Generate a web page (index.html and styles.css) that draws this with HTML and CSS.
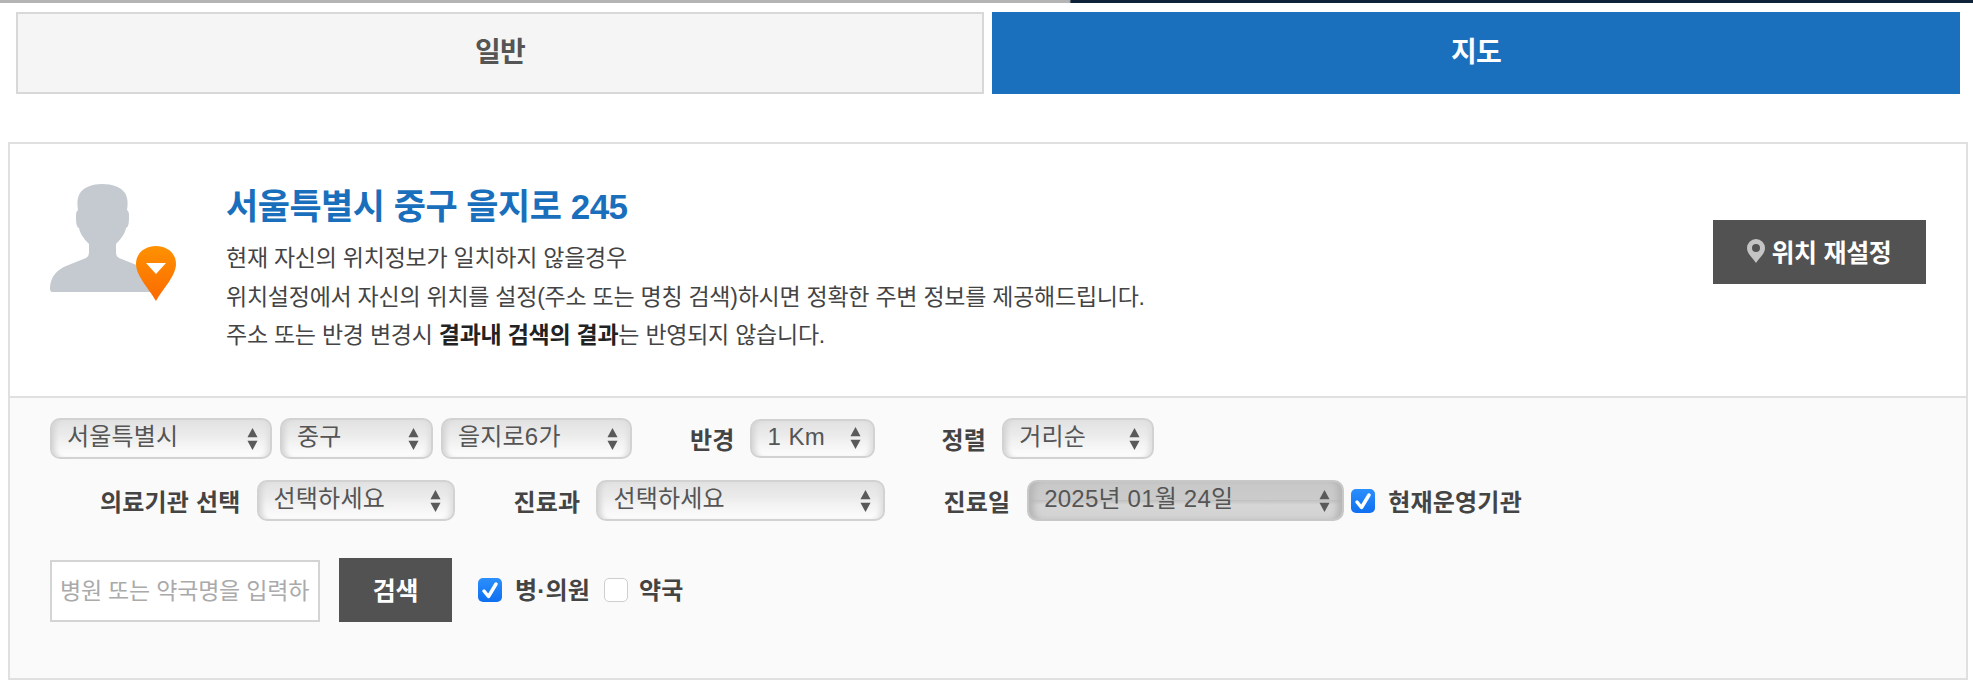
FILE: index.html
```html
<!DOCTYPE html>
<html lang="ko">
<head>
    <meta charset="UTF-8">
    <title>병원 찾기</title>
    <link rel="stylesheet" href="styles.css">
</head>
<body>
    <div class="topline"></div>
    <div class="tabs">
        <a class="tab" href="#">일반</a>
        <a class="tab on" href="#">지도</a>
    </div>

    <div class="box">
        <div class="loc">
            <svg class="avatar" width="130" height="120" viewBox="0 0 130 120">
                <path fill="#c5cad1" d="M3 108C0 108 0 106 0 103C1 92 7 86 16 82L36 74C39 72 39 70 39 66V60C33 54 30 49 29 44C26 43 26 37 26 31C26 28 27 27 28 26C27 20 27 14 30 9C34 3 43 0 52 0C62 0 71 3 75 9C78 14 78 20 77 26C78 27 79 28 79 31C79 37 79 43 76 44C75 49 72 54 66 60V66C66 70 66 72 69 74L89 82C98 86 104 92 105 103V108Z"/>
                <defs>
                    <linearGradient id="pin" x1="0" y1="0" x2="0" y2="1">
                        <stop offset="0" stop-color="#ff9100"/>
                        <stop offset="1" stop-color="#fb6a00"/>
                    </linearGradient>
                </defs>
                <path fill="url(#pin)" d="M106 117C100 106 86 92 86 80C86 69 95 62 106 62S126 69 126 80C126 92 112 106 106 117Z"/>
                <path fill="#fff" d="M96 79h20l-10 11z"/>
            </svg>
            <div class="loc_text">
                <h2>서울특별시 중구 을지로 245</h2>
                <p>현재 자신의 위치정보가 일치하지 않을경우</p>
                <p>위치설정에서 자신의 위치를 설정(주소 또는 명칭 검색)하시면 정확한 주변 정보를 제공해드립니다.</p>
                <p>주소 또는 반경 변경시 <b>결과내 검색의 결과</b>는 반영되지 않습니다.</p>
            </div>
            <a class="btn reset" href="#">
                <svg width="18" height="24" viewBox="0 0 18 24"><path fill="#c4c4c4" fill-rule="evenodd" d="M9 24C6 19 0 15 0 9a9 9 0 0 1 18 0c0 6-6 10-9 15zM9 5a4 4 0 1 0 0 8 4 4 0 0 0 0-8z"/></svg>
                위치 재설정
            </a>
        </div>

        <div class="search">
            <div class="row row1">
                <span class="sel w222"><select><option>서울특별시</option></select><svg viewBox="0 0 12 24"><path d="M6 0l5.500 10H.5zM6 24L.5 14h11z"/></svg></span>
                <span class="sel w153"><select><option>중구</option></select><svg viewBox="0 0 12 24"><path d="M6 0l5.500 10H.5zM6 24L.5 14h11z"/></svg></span>
                <span class="sel w190"><select><option>을지로6가</option></select><svg viewBox="0 0 12 24"><path d="M6 0l5.500 10H.5zM6 24L.5 14h11z"/></svg></span>
                <label class="lab radius">반경</label>
                <span class="sel w125 small"><select><option>1 Km</option></select><svg viewBox="0 0 12 24"><path d="M6 0l5.500 10H.5zM6 24L.5 14h11z"/></svg></span>
                <label class="lab order">정렬</label>
                <span class="sel w152"><select><option>거리순</option></select><svg viewBox="0 0 12 24"><path d="M6 0l5.500 10H.5zM6 24L.5 14h11z"/></svg></span>
            </div>
            <div class="row row2">
                <label class="lab org">의료기관 선택</label>
                <span class="sel w198"><select><option>선택하세요</option></select><svg viewBox="0 0 12 24"><path d="M6 0l5.500 10H.5zM6 24L.5 14h11z"/></svg></span>
                <label class="lab dept">진료과</label>
                <span class="sel w289"><select><option>선택하세요</option></select><svg viewBox="0 0 12 24"><path d="M6 0l5.500 10H.5zM6 24L.5 14h11z"/></svg></span>
                <label class="lab day">진료일</label>
                <span class="sel w317 active"><select><option>2025년 01월 24일</option></select><svg viewBox="0 0 12 24"><path d="M6 0l5.500 10H.5zM6 24L.5 14h11z"/></svg></span>
                <label class="chk open"><i class="box_on"><svg viewBox="0 0 24 24"><path d="M6 13l4.500 5.500L18 6"/></svg></i>현재운영기관</label>
            </div>
            <div class="row row3">
                <input type="text" class="keyword" placeholder="병원 또는 약국명을 입력하세요">
                <a class="btn find" href="#">검색</a>
                <label class="chk first"><i class="box_on"><svg viewBox="0 0 24 24"><path d="M6 13l4.500 5.500L18 6"/></svg></i><span>병·의원</span></label>
                <label class="chk second"><i class="box_off"></i><span>약국</span></label>
            </div>
        </div>
    </div>
</body>
</html>
```

FILE: styles.css
```css
* {
    box-sizing: border-box;
}

body {
    margin: 0;
    height: 690px;
    overflow: hidden;
    background: #fff;
    color: #333;
    font-family: "Liberation Sans", "Noto Sans CJK KR", sans-serif;
}

a {
    text-decoration: none;
}

.topline {
    height: 3px;
    background: linear-gradient(to right, #b4b4b4 0, #b4b4b4 54.2%, #0e2238 54.3%, #0e2238 100%);
}

.tabs {
    display: flex;
    gap: 8px;
    margin: 9px 13px 0 16px;
}

.tab {
    flex: 1;
    height: 82px;
    line-height: 77px;
    text-align: center;
    font-size: 28px;
    font-weight: 700;
    letter-spacing: -0.8px;
    color: #555;
    background: #f5f5f5;
    border: 2px solid #d8d8d8;
}

.tab.on {
    color: #fff;
    background: #1a70bc;
    border-color: #1a70bc;
}

.box {
    margin: 48px 5px 0 8px;
    height: 538px;
    border: 2px solid #e0e0e0;
}

/* location */
.loc {
    display: flex;
    align-items: flex-start;
    height: 252px;
    padding: 40px 40px 0 40px;
}

.avatar {
    flex: none;
    margin-right: 46px;
}

.loc_text {
    flex: 1;
}

.loc_text h2 {
    margin: 0 0 9px;
    font-size: 35px;
    line-height: 46px;
    font-weight: 700;
    letter-spacing: -0.5px;
    color: #1a6fbc;
}

.loc_text p {
    margin: 0;
    font-size: 23px;
    line-height: 38.500px;
    letter-spacing: -0.25px;
    color: #444;
}

.loc_text b {
    color: #222;
}

.btn {
    display: flex;
    align-items: center;
    justify-content: center;
    padding-bottom: 2px;
    color: #fff;
    background: #525252;
    font-weight: 700;
}

.reset {
    width: 213px;
    height: 64px;
    margin-top: 36px;
    gap: 6px;
    font-size: 25px;
    letter-spacing: -0.3px;
}

/* search */
.search {
    height: 282px;
    padding: 20px 0 0 40px;
    background: #fafafa;
    border-top: 2px solid #e0e0e0;
}

.row {
    display: flex;
    align-items: center;
}

.row1 {
    height: 41px;
}

.row2 {
    height: 41px;
    margin-top: 21px;
}

.row3 {
    height: 64px;
    margin-top: 37px;
}

.lab {
    font-size: 24px;
    font-weight: 700;
    letter-spacing: 0.2px;
    color: #444;
    white-space: nowrap;
}

.sel {
    position: relative;
    display: block;
    flex: none;
    height: 41px;
    margin-right: 8px;
}

.sel select {
    display: block;
    width: 100%;
    height: 100%;
    padding: 0 30px 5px 15px;
    appearance: none;
    font: 400 24px "Liberation Sans", "Noto Sans CJK KR", sans-serif;
    letter-spacing: 0.2px;
    color: #555;
    background: linear-gradient(to bottom, #e2e2e2 0, #ebebeb 40%, #f2f2f2 60%, #fdfdfd 100%);
    border: 2px solid #d2d2d2;
    border-radius: 10px;
    box-shadow: inset 6px 0 5px -3px #d4d4d4, inset -6px 0 5px -3px #dedede;
}

.sel svg {
    position: absolute;
    top: 10px;
    right: 14px;
    width: 11px;
    height: 22px;
    fill: #5a5a5a;
}

.sel.small {
    height: 39px;
}

.sel.small svg {
    top: 8px;
}

.sel.small select {
    padding-left: 16px;
    letter-spacing: 0.4px;
}

.sel.active select {
    border-color: #c8c8c8;
    background: linear-gradient(to bottom, #c8c8c8 0, #cbcbcb 48%, #c2c2c2 50%, #d6d6d6 62%, #d2d2d2 100%);
    box-shadow: inset 9px 0 6px -4px #b6b6b6, inset -9px 0 6px -4px #b6b6b6;
}

.w222 { width: 222px; }
.w153 { width: 153px; }
.w190 { width: 191px; margin-right: 0; }
.w125 { width: 125px; margin-right: 0; }
.w152 { width: 152px; }
.w198 { width: 198px; margin-right: 0; }
.w289 { width: 289px; margin-right: 0; }
.w317 { width: 317px; margin-right: 0; }

.radius { margin: 0 15px 0 58px; }
.order { margin: 0 16px 0 67px; }
.org { margin: 0 16px 0 50px; }
.dept { margin: 0 16px 0 59px; }
.day { margin: 0 17px 0 58px; }

.chk {
    display: flex;
    align-items: center;
    gap: 13px;
    font-size: 24px;
    font-weight: 700;
    letter-spacing: 0.2px;
    color: #444;
    white-space: nowrap;
}

.chk i {
    display: block;
    flex: none;
    width: 24px;
    height: 24px;
    border-radius: 5px;
}

.row3 .chk span {
    padding-bottom: 3px;
}

.box_on {
    background: linear-gradient(to bottom, #2b8ffd, #0f6ff0);
}

.box_on svg {
    display: block;
    fill: none;
    stroke: #fff;
    stroke-width: 3.500;
    stroke-linecap: round;
    stroke-linejoin: round;
}

.box_off {
    background: #fff;
    border: 1px solid #cfcfcf;
}

.open { margin-left: 7px; }
.first { margin-left: 26px; }
.second { margin-left: 14px; }

.second.chk {
    gap: 11px;
}

.keyword {
    flex: none;
    width: 270px;
    height: 62px;
    margin-top: 2px;
    padding: 0 8px;
    font: 400 23px "Liberation Sans", "Noto Sans CJK KR", sans-serif;
    letter-spacing: -0.2px;
    background: #fff;
    border: 2px solid #d4d4d4;
    border-radius: 0;
}

.keyword::placeholder {
    color: #aaa;
}

.find {
    width: 113px;
    height: 64px;
    margin-left: 19px;
    font-size: 25px;
    letter-spacing: -0.3px;
}
```
